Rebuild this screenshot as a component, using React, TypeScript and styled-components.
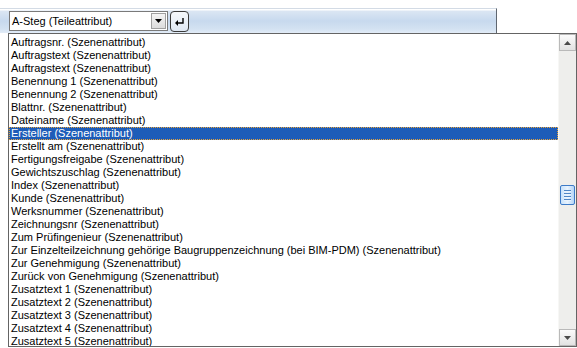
import styled, { createGlobalStyle } from "styled-components";

const Global = createGlobalStyle`
  html, body {
    margin: 0;
    padding: 0;
    background: #ffffff;
    font-family: "Liberation Sans", Arial, sans-serif;
    font-size: 11px;
  }
`;

const Page = styled.div`
  width: 577px;
  height: 348px;
  padding-top: 8px;
  box-sizing: border-box;
  overflow: hidden;
`;

const Toolbar = styled.div`
  width: 497px;
  height: 25px;
  box-sizing: border-box;
  border-top: 1px solid #d3dbe5;
  border-right: 1px solid #5f6670;
  background: linear-gradient(#ffffff 0px, #ffffff 1px, #dbe6f3 2px, #c7d9ee 12px, #d3e2f2 20px, #e2ecf7 24px);
  display: flex;
  align-items: center;
  padding-left: 9px;
  gap: 2px;
`;

const Combo = styled.div`
  width: 159px;
  height: 20px;
  box-sizing: border-box;
  border: 1px solid #7a7a7a;
  background: #fff;
  display: flex;
  align-items: stretch;
`;

const ComboText = styled.div`
  flex: 1;
  padding-left: 2px;
  line-height: 18px;
  color: #000;
  white-space: nowrap;
`;

const ComboArrow = styled.div`
  width: 15px;
  margin: 1px;
  box-sizing: border-box;
  border: 1px solid #a0a0a0;
  background: linear-gradient(#f4f4f4, #dcdcdc);
  display: flex;
  align-items: center;
  justify-content: center;
`;

const ReturnButton = styled.div`
  width: 19px;
  height: 21px;
  box-sizing: border-box;
  border: 1px solid #3a3a3a;
  border-radius: 4px;
  background: linear-gradient(#f5f8fc, #dfe8f3);
  display: flex;
  align-items: center;
  justify-content: center;
`;

const ListBox = styled.div`
  margin-left: 8px;
  width: 569px;
  height: 314px;
  box-sizing: border-box;
  border: 1px solid #646464;
  display: flex;
  background: #fff;
`;

const Items = styled.div`
  flex: 1;
  overflow: hidden;
  padding-top: 2px;
`;

const Item = styled.div<{ $selected?: boolean }>`
  height: 13px;
  line-height: 13px;
  padding-left: 2px;
  white-space: nowrap;
  box-sizing: border-box;
  color: ${(p) => (p.$selected ? "#ffffff" : "#000000")};
  background: ${(p) => (p.$selected ? "#1d5cb8" : "transparent")};
  outline: ${(p) => (p.$selected ? "1px dotted #e8a33a" : "none")};
  outline-offset: -1px;
`;

const ScrollBar = styled.div`
  width: 17px;
  display: flex;
  flex-direction: column;
  background: #eeeeec;
  border-left: 1px solid #f7f7f5;
`;

const ScrollBtn = styled.div`
  height: 17px;
  box-sizing: border-box;
  border: 1px solid #b9b9b9;
  background: linear-gradient(#fbfbfb, #e2e2e2);
  display: flex;
  align-items: center;
  justify-content: center;
`;

const Track = styled.div`
  flex: 1;
  display: flex;
  flex-direction: column;
  padding-top: 134px;
`;

const Thumb = styled.div`
  height: 20px;
  margin: 0 1px;
  box-sizing: border-box;
  border: 1px solid #3d7bc8;
  border-radius: 2px;
  background: linear-gradient(90deg, #c8e2fb, #e8f3fe 50%, #b5d5f7);
  display: flex;
  flex-direction: column;
  align-items: center;
  justify-content: center;
  gap: 1px;
`;

const Grip = styled.div`
  width: 7px;
  height: 1px;
  background: #4f86c6;
  border-bottom: 1px solid #e9f3fe;
`;

const items = [
  "Auftragsnr. (Szenenattribut)",
  "Auftragstext (Szenenattribut)",
  "Auftragstext (Szenenattribut)",
  "Benennung 1 (Szenenattribut)",
  "Benennung 2 (Szenenattribut)",
  "Blattnr. (Szenenattribut)",
  "Dateiname (Szenenattribut)",
  "Ersteller (Szenenattribut)",
  "Erstellt am (Szenenattribut)",
  "Fertigungsfreigabe (Szenenattribut)",
  "Gewichtszuschlag (Szenenattribut)",
  "Index (Szenenattribut)",
  "Kunde (Szenenattribut)",
  "Werksnummer (Szenenattribut)",
  "Zeichnungsnr (Szenenattribut)",
  "Zum Prüfingenieur (Szenenattribut)",
  "Zur Einzelteilzeichnung gehörige Baugruppenzeichnung (bei BIM-PDM) (Szenenattribut)",
  "Zur Genehmigung (Szenenattribut)",
  "Zurück von Genehmigung (Szenenattribut)",
  "Zusatztext 1 (Szenenattribut)",
  "Zusatztext 2 (Szenenattribut)",
  "Zusatztext 3 (Szenenattribut)",
  "Zusatztext 4 (Szenenattribut)",
  "Zusatztext 5 (Szenenattribut)",
];

export default function App() {
  return (
    <Page>
      <Global />
      <Toolbar>
        <Combo>
          <ComboText>A-Steg (Teileattribut)</ComboText>
          <ComboArrow>
            <svg width="7" height="4" viewBox="0 0 7 4">
              <path d="M0 0h7L3.5 4z" fill="#000" />
            </svg>
          </ComboArrow>
        </Combo>
        <ReturnButton>
          <svg width="11" height="9" viewBox="0 0 11 9">
            <path d="M9 1v5H3" stroke="#000" strokeWidth="1.4" fill="none" />
            <path d="M1 6l3-3v6z" fill="#000" />
          </svg>
        </ReturnButton>
      </Toolbar>
      <ListBox>
        <Items>
          {items.map((t, i) => (
            <Item key={i} $selected={i === 7}>
              {t}
            </Item>
          ))}
        </Items>
        <ScrollBar>
          <ScrollBtn>
            <svg width="7" height="4" viewBox="0 0 7 4">
              <path d="M3.5 0L7 4H0z" fill="#4a4a4a" />
            </svg>
          </ScrollBtn>
          <Track>
            <Thumb>
              <Grip />
              <Grip />
              <Grip />
              <Grip />
            </Thumb>
          </Track>
          <ScrollBtn>
            <svg width="7" height="4" viewBox="0 0 7 4">
              <path d="M0 0h7L3.5 4z" fill="#4a4a4a" />
            </svg>
          </ScrollBtn>
        </ScrollBar>
      </ListBox>
    </Page>
  );
}
